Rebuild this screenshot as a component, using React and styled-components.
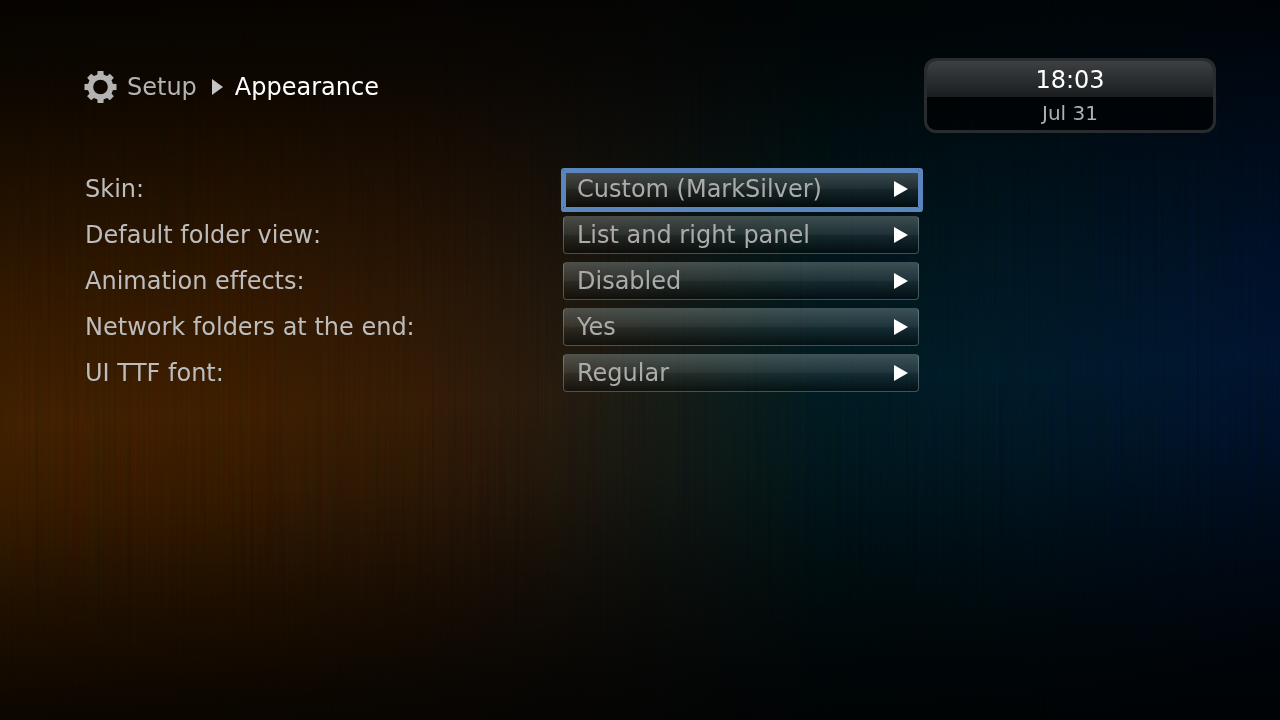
import React, { useState } from 'react';
import styled, { createGlobalStyle, css } from 'styled-components';

const GlobalStyle = createGlobalStyle`
  * {
    box-sizing: border-box;
  }

  body {
    margin: 0;
    background: #000;
    font-family: "DejaVu Sans", Verdana, sans-serif;
    font-kerning: none;
    font-variant-ligatures: none;
  }
`

const Screen = styled.div`
  position: relative;
  min-height: 100vh;
  padding: 58px 64px 58px 84px;
  overflow: hidden;
  isolation: isolate;
  background:
    linear-gradient(
      177deg,
      rgba(0, 0, 0, .92) 0%,
      rgba(0, 0, 0, .78) 12%,
      rgba(0, 0, 0, .5) 25%,
      rgba(0, 0, 0, .2) 40%,
      rgba(0, 0, 0, 0) 54%,
      rgba(0, 0, 0, .16) 64%,
      rgba(0, 0, 0, .52) 77%,
      rgba(0, 0, 0, .8) 90%,
      rgba(0, 0, 0, .92) 100%
    ),
    linear-gradient(
      90deg,
      #3d1e00 0%,
      #3a1c00 18%,
      #321a04 32%,
      #26190c 42%,
      #161a14 51%,
      #001a20 64%,
      #001926 78%,
      #00152b 92%,
      #00122d 100%
    );
`

const Grain = styled.svg`
  position: absolute;
  inset: 0;
  width: 100%;
  height: 100%;
  z-index: -1;
  mix-blend-mode: overlay;
  opacity: .14;
`

const Header = styled.header`
  display: flex;
  justify-content: space-between;
  align-items: flex-start;
`

const Breadcrumb = styled.nav`
  display: flex;
  align-items: center;
  height: 58px;
  font-size: 24px;
  line-height: 32px;
  color: #b3b3b3;

  & svg {
    flex: none;
    display: block;
  }

  & a {
    margin: 0 15px 0 10px;
    color: inherit;
    text-decoration: none;
  }
`

const PageTitle = styled.h1`
  margin: 0 0 0 12px;
  font-size: 24px;
  font-weight: normal;
  color: #fff;
`

const Clock = styled.div`
  width: 292px;
  border: 3px solid #282c2f;
  border-radius: 12px;
  overflow: hidden;
  text-align: center;
`

const Time = styled.div`
  height: 36px;
  font-size: 24px;
  line-height: 38px;
  color: #fff;
  background: linear-gradient(#3c4043, #1a1d20);
`

const DateLine = styled.div`
  height: 33px;
  font-size: 20px;
  line-height: 32px;
  color: #b0b0b0;
  background: rgba(0, 0, 0, .6);
`

const Settings = styled.form`
  display: flex;
  flex-direction: column;
  gap: 8px;
  padding-top: 37px;
`

const Row = styled.div`
  display: grid;
  grid-template-columns: 479fr 356fr 297fr;
  align-items: center;
`

const Label = styled.label`
  padding-left: 1px;
  font-size: 24px;
  line-height: 38px;
  color: #bdbdbd;
`

const Field = styled.div`
  display: grid;
  align-items: center;

  & > * {
    grid-area: 1 / 1;
  }

  & svg {
    justify-self: end;
    margin-right: 11px;
    pointer-events: none;
  }
`

const Select = styled.select`
  appearance: none;
  width: 100%;
  height: 38px;
  padding: 0 36px 0 13px;
  border: 1px solid rgba(190, 205, 205, .35);
  border-top-color: transparent;
  border-radius: 4px;
  outline: none;
  font-family: inherit;
  font-size: 24px;
  color: #ababab;
  background: linear-gradient(
    rgba(160, 175, 175, .38),
    rgba(130, 145, 145, .24) 48%,
    rgba(110, 125, 125, .18) 52%,
    rgba(0, 0, 0, .4)
  ) border-box;

  & option {
    background: #14191b;
  }

  ${({$active}) => $active && css`
    border-color: #5b86bd;
    border-radius: 1px;
    box-shadow: 1px 1px 0 3px #5b86bd, inset 1px 1px 0 1px #5b86bd;
  `}
`

const settings = [
  {id: 'skin', label: 'Skin:', value: 'Custom (MarkSilver)'},
  {id: 'folder-view', label: 'Default folder view:', value: 'List and right panel'},
  {id: 'animation', label: 'Animation effects:', value: 'Disabled'},
  {id: 'network-folders', label: 'Network folders at the end:', value: 'Yes'},
  {id: 'ui-font', label: 'UI TTF font:', value: 'Regular'},
]

const toothAngles = [0, 45, 90, 135, 180, 225, 270, 315];

const GearIcon = () => (
  <svg width="33" height="33" viewBox="-16.5 -16 33 33" fill="#b3b3b3" aria-hidden="true">
    <circle r="10" fill="none" stroke="#b3b3b3" strokeWidth="5.4"/>
    {toothAngles.map(angle => (
      <path key={angle} d="M-3.3-11 -2.9-16H2.9L3.3-11Z" transform={`rotate(${angle})`}/>
    ))}
  </svg>
)

const Arrow = ({width, height, color}) => (
  <svg width={width} height={height} viewBox="0 0 14 16" preserveAspectRatio="none" aria-hidden="true">
    <path d="M0 0 14 8 0 16Z" fill={color}/>
  </svg>
)

const App = () => {
  const [active, setActive] = useState('skin');

  return (
    <>
      <GlobalStyle/>
      <Screen>
        {/* brushed metal streaks */}
        <Grain aria-hidden="true">
          <filter id="streaks" x="0" y="0" width="100%" height="100%">
            <feTurbulence type="fractalNoise" baseFrequency="0.35 0.003" numOctaves="3" seed="4"/>
            <feColorMatrix values="1.6 0 0 0 -.3  0 1.6 0 0 -.3  0 0 1.6 0 -.3  0 0 0 0 1"/>
          </filter>
          <rect width="100%" height="100%" filter="url(#streaks)"/>
        </Grain>

        <Header>
          <Breadcrumb aria-label="Breadcrumb">
            <GearIcon/>
            <a href="#setup">Setup</a>
            <Arrow width={11} height={16} color="#c4c4c4"/>
            <PageTitle>Appearance</PageTitle>
          </Breadcrumb>
          <Clock>
            <Time>18:03</Time>
            <DateLine>Jul 31</DateLine>
          </Clock>
        </Header>

        <Settings>
          {settings.map(({id, label, value}) => (
            <Row key={id}>
              <Label htmlFor={id}>{label}</Label>
              <Field>
                <Select id={id} $active={active === id} onFocus={() => setActive(id)}>
                  <option>{value}</option>
                </Select>
                <Arrow width={14} height={16} color="#fff"/>
              </Field>
            </Row>
          ))}
        </Settings>
      </Screen>
    </>
  )
}

export default App;
